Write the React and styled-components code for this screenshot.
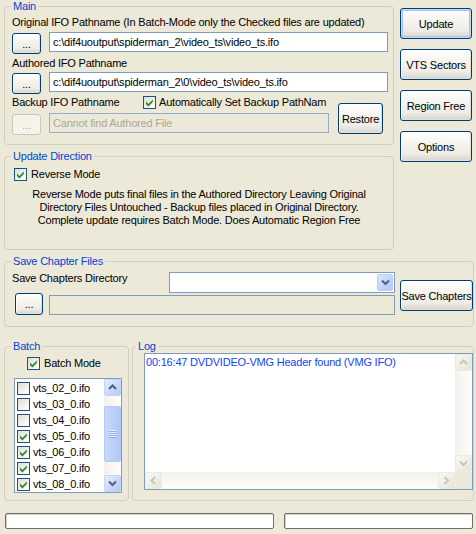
import React from "react";
import styled, { createGlobalStyle, css } from "styled-components";

const Global = createGlobalStyle`
  html, body { margin: 0; padding: 0; background: #ECE9D8; }
  body {
    font-family: "Liberation Sans", Arial, sans-serif;
    font-size: 11px;
    letter-spacing: -0.2px;
    color: #000;
  }
  * { box-sizing: border-box; }
`;

const Window = styled.div`
  width: 476px;
  height: 534px;
  padding: 0 0 0 4px;
  background: #ECE9D8;
  overflow: hidden;
`;

const TopRow = styled.div`
  display: flex;
  align-items: flex-start;
  gap: 6px;
`;

const LeftCol = styled.div`
  width: 390px;
  display: flex;
  flex-direction: column;
  gap: 5px;
`;

const SideButtons = styled.div`
  width: 72px;
  padding-top: 8px;
  display: flex;
  flex-direction: column;
  gap: 10px;
`;

const Group = styled.fieldset`
  margin: 0;
  padding: 0;
  min-width: 0;
  border: 1px solid #D0D0BF;
  border-radius: 4px;
  ${(p) => p.$w && css`width: ${p.$w}px;`}
  ${(p) => p.$mt && css`margin-top: ${p.$mt}px;`}
`;

const Legend = styled.legend`
  margin-left: ${(p) => (p.$indent != null ? p.$indent : 6)}px;
  padding: 0 2px;
  line-height: 13px;
  color: #0046D5;
`;

const Body = styled.div`
  display: flex;
  flex-direction: ${(p) => p.$dir || "column"};
  padding: ${(p) => p.$pad};
`;

const Label = styled.div`
  line-height: 13px;
  height: 13px;
  white-space: nowrap;
  ${(p) => p.$mt && css`margin-top: ${p.$mt}px;`}
  ${(p) => p.$w && css`width: ${p.$w}px; flex: none;`}
`;

const PathRow = styled.div`
  display: flex;
  align-items: flex-start;
  gap: ${(p) => (p.$gap != null ? p.$gap : 8)}px;
  margin-top: ${(p) => p.$mt || 0}px;
`;

const XPButton = styled.button`
  font: inherit;
  letter-spacing: inherit;
  color: #000;
  flex: none;
  width: ${(p) => p.$w}px;
  height: ${(p) => p.$h}px;
  margin-top: ${(p) => p.$mt || 0}px;
  margin-left: ${(p) => p.$ml || 0}px;
  padding: 0;
  white-space: nowrap;
  border: 1px solid #003C74;
  border-radius: 3px;
  background: linear-gradient(180deg, #FFFFFF 0%, #F6F5F0 35%, #EDECE6 75%, #D9D4C9 100%);
  box-shadow: inset 1px 1px 0 #FFFFFF, inset -1px -1px 0 #E2DFD5;
  ${(p) =>
    p.$default &&
    css`
      box-shadow: inset 0 0 0 1px #C4DAFA, inset 0 0 0 2px #A9C3F0;
    `}
  &:disabled {
    border-color: #C9C7BA;
    background: #F5F4EA;
    color: #ACA899;
    box-shadow: none;
  }
`;

const TextField = styled.input`
  font: inherit;
  letter-spacing: inherit;
  height: 20px;
  flex: 1;
  min-width: 0;
  margin: ${(p) => p.$mt || 0}px 0 0 0;
  padding: 0 0 0 3px;
  border: 1px solid #7F9DB9;
  background: #FFFFFF;
  color: #000;
  outline: none;
  &:disabled {
    background: #ECE9D8;
    color: #ACA899;
    border-color: #97AECA;
  }
`;

const CheckLine = styled.div`
  display: flex;
  align-items: center;
  height: 13px;
  gap: ${(p) => (p.$gap != null ? p.$gap : 4)}px;
  margin-left: ${(p) => p.$ml || 0}px;
  white-space: nowrap;
  line-height: 13px;
`;

const Box = styled.span`
  width: 13px;
  height: 13px;
  flex: none;
  border: 1px solid #1C5180;
  background: linear-gradient(135deg, #DCDCD7 0%, #F2F2EF 60%, #FFFFFF 100%);
  display: inline-flex;
  align-items: center;
  justify-content: center;
`;

const Check = ({ checked }) => (
  <Box>
    {checked && (
      <svg width="11" height="11" viewBox="0 0 11 11">
        <path d="M2 4.6 L4.4 7 L8.8 2.6 L8.8 5 L4.4 9.4 L2 7 Z" fill="#21891F" />
      </svg>
    )}
  </Box>
);

const BackupArea = styled.div`
  display: flex;
  align-items: flex-start;
  margin-top: 2px;
`;

const BackupLeft = styled.div`
  width: 317px;
  display: flex;
  flex-direction: column;
`;

const Description = styled.div`
  margin-top: 7px;
  padding-right: 9px;
  text-align: center;
  line-height: 13px;
  white-space: nowrap;
`;

const Combo = styled.div`
  flex: 1;
  height: 21px;
  border: 1px solid #7F9DB9;
  background: #FFFFFF;
  display: flex;
  justify-content: flex-end;
  padding: 1px;
`;

const DropButton = styled.span`
  width: 16px;
  height: 17px;
  border: 1px solid #BBCDF6;
  border-radius: 2px;
  background: linear-gradient(135deg, #DCE6FD 0%, #C3D4FA 55%, #B3C8F6 100%);
  display: flex;
  align-items: center;
  justify-content: center;
`;

const ChapterLeft = styled.div`
  flex: 1;
  display: flex;
  flex-direction: column;
`;

const ChapterRow = styled.div`
  display: flex;
  align-items: flex-start;
`;

const BottomRow = styled.div`
  display: flex;
  gap: 3px;
  margin-top: 13px;
`;

const ListBox = styled.div`
  margin-top: 8px;
  width: 108px;
  height: 115px;
  border: 1px solid #7F9DB9;
  background: #FFFFFF;
  display: flex;
`;

const ListItems = styled.div`
  flex: 1;
  overflow: hidden;
  padding: 1px 0 0 2px;
`;

const ListItem = styled.div`
  display: flex;
  align-items: center;
  gap: 3px;
  height: 16px;
  line-height: 13px;
  white-space: nowrap;
`;

const ScrollBarV = styled.div`
  width: 17px;
  flex: none;
  display: flex;
  flex-direction: column;
  justify-content: space-between;
  background: linear-gradient(90deg, #F3F1EC 0%, #FEFEFB 100%);
`;

const ScrollBtn = styled.span`
  width: 17px;
  height: 17px;
  flex: none;
  display: flex;
  align-items: center;
  justify-content: center;
  border-radius: 2px;
  ${(p) =>
    p.$off
      ? css`
          border: 1px solid #ECEBE3;
          background: linear-gradient(135deg, #F8F7F2 0%, #EEEDE5 60%, #E6E4DA 100%);
        `
      : css`
          border: 1px solid #C3D3FD;
          background: linear-gradient(135deg, #E8EFFD 0%, #C9D8FA 55%, #B6CAF6 100%);
        `}
`;

const Thumb = styled.span`
  width: 17px;
  height: ${(p) => p.$h}px;
  margin-top: ${(p) => p.$top}px;
  flex: none;
  border: 1px solid #B3C8F5;
  border-radius: 2px;
  background: linear-gradient(90deg, #C9D8FB 0%, #BCD0F8 50%, #B2C8F5 100%);
  display: flex;
  align-items: center;
  justify-content: center;
`;

const Grip = styled.span`
  width: 7px;
  height: 8px;
  background: repeating-linear-gradient(180deg, #EEF4FE 0 1px, #8CA9E8 1px 2px);
`;

const ThumbTrack = styled.div`
  flex: 1;
  display: flex;
  flex-direction: column;
`;

const LogArea = styled.div`
  width: 329px;
  height: 137px;
  border: 1px solid #7F9DB9;
  background: #FFFFFF;
  display: grid;
  grid-template-columns: 1fr 17px;
  grid-template-rows: 1fr 17px;
`;

const LogText = styled.div`
  padding: 2px 0 0 1px;
  line-height: 13px;
  color: #1543F4;
  white-space: nowrap;
  overflow: hidden;
`;

const ScrollBarH = styled.div`
  display: flex;
  justify-content: space-between;
  background: linear-gradient(180deg, #F3F1EC 0%, #FEFEFB 100%);
`;

const Corner = styled.div`
  background: #ECE9D8;
`;

const StatusRow = styled.div`
  display: flex;
  gap: 10px;
  margin-top: 12px;
  padding-left: 1px;
`;

const StatusBar = styled.div`
  width: ${(p) => p.$w}px;
  height: 16px;
  border: 1px solid #6F6F6F;
  border-radius: 2px;
  background: #FFFFFF;
  box-shadow: inset 1px 1px 0 #D4D2C8;
`;

const Chevron = ({ dir, color }) => {
  const vertical = dir === "up" || dir === "down";
  const d = {
    up: "M1 5 L4.5 1.5 L8 5",
    down: "M1 1.5 L4.5 5 L8 1.5",
    left: "M5 1 L1.5 4.5 L5 8",
    right: "M1.5 1 L5 4.5 L1.5 8",
  }[dir];
  return (
    <svg width={vertical ? 9 : 7} height={vertical ? 7 : 9} viewBox={vertical ? "0 0 9 7" : "0 0 7 9"}>
      <path d={d} fill="none" stroke={color} strokeWidth="2" />
    </svg>
  );
};

const files = [
  { name: "vts_02_0.ifo", on: false },
  { name: "vts_03_0.ifo", on: false },
  { name: "vts_04_0.ifo", on: false },
  { name: "vts_05_0.ifo", on: true },
  { name: "vts_06_0.ifo", on: true },
  { name: "vts_07_0.ifo", on: true },
  { name: "vts_08_0.ifo", on: true },
];

export default function App() {
  return (
    <>
      <Global />
      <Window>
        <TopRow>
          <LeftCol>
            <Group>
              <Legend>Main</Legend>
              <Body $pad="3px 5px 9px 7px">
                <Label>Original IFO Pathname (In Batch-Mode only the Checked files are updated)</Label>
                <PathRow $mt={3}>
                  <XPButton $w={29} $h={21} $mt={1}>...</XPButton>
                  <TextField readOnly defaultValue="c:\dif4uoutput\spiderman_2\video_ts\video_ts.ifo" />
                </PathRow>
                <Label $mt={3}>Authored IFO Pathname</Label>
                <PathRow $mt={2}>
                  <XPButton $w={29} $h={21} $mt={1}>...</XPButton>
                  <TextField readOnly defaultValue="c:\dif4uoutput\spiderman_2\0\video_ts\video_ts.ifo" />
                </PathRow>
                <BackupArea>
                  <BackupLeft>
                    <CheckLine $gap={0}>
                      <Label $w={131}>Backup IFO Pathname</Label>
                      <Check checked />
                      <Label style={{ marginLeft: 3 }}>Automatically Set Backup PathNam</Label>
                    </CheckLine>
                    <PathRow $mt={4}>
                      <XPButton $w={29} $h={21} $mt={1} disabled>...</XPButton>
                      <TextField disabled defaultValue="Cannot find Authored File" />
                    </PathRow>
                  </BackupLeft>
                  <XPButton $w={45} $h={31} $mt={7} $ml={9}>Restore</XPButton>
                </BackupArea>
              </Body>
            </Group>
            <Group>
              <Legend>Update Direction</Legend>
              <Body $pad="5px 0 22px 9px">
                <CheckLine>
                  <Check checked />
                  <span>Reverse Mode</span>
                </CheckLine>
                <Description>
                  Reverse Mode puts final files in the Authored Directory Leaving Original
                  <br />
                  Directory Files Untouched - Backup files placed in Original Directory.
                  <br />
                  Complete update requires Batch Mode. Does Automatic Region Free
                </Description>
              </Body>
            </Group>
          </LeftCol>
          <SideButtons>
            <XPButton $w={72} $h={31} $default>Update</XPButton>
            <XPButton $w={72} $h={31}>VTS Sectors</XPButton>
            <XPButton $w={72} $h={31}>Region Free</XPButton>
            <XPButton $w={72} $h={31}>Options</XPButton>
          </SideButtons>
        </TopRow>

        <Group $w={470} $mt={5}>
          <Legend>Save Chapter Files</Legend>
          <Body $dir="row" $pad="4px 0 11px 7px">
            <ChapterLeft>
              <ChapterRow>
                <Label $w={157}>Save Chapters Directory</Label>
                <Combo>
                  <DropButton>
                    <Chevron dir="down" color="#4D6185" />
                  </DropButton>
                </Combo>
              </ChapterRow>
              <PathRow $gap={6}>
                <XPButton $w={28} $h={22} $ml={3}>...</XPButton>
                <TextField disabled $mt={2} defaultValue="" style={{ borderColor: "#7F9DB9" }} />
              </PathRow>
            </ChapterLeft>
            <XPButton $w={73} $h={31} $mt={8} $ml={5}>Save Chapters</XPButton>
          </Body>
        </Group>

        <BottomRow>
          <Group $w={125}>
            <Legend>Batch</Legend>
            <Body $pad="4px 0 7px 9px">
              <CheckLine $ml={13}>
                <Check checked />
                <span>Batch Mode</span>
              </CheckLine>
              <ListBox>
                <ListItems>
                  {files.map((f) => (
                    <ListItem key={f.name}>
                      <Check checked={f.on} />
                      <span>{f.name}</span>
                    </ListItem>
                  ))}
                </ListItems>
                <ScrollBarV>
                  <ScrollBtn>
                    <Chevron dir="up" color="#4D6185" />
                  </ScrollBtn>
                  <ThumbTrack>
                    <Thumb $h={56} $top={10}>
                      <Grip />
                    </Thumb>
                  </ThumbTrack>
                  <ScrollBtn>
                    <Chevron dir="down" color="#4D6185" />
                  </ScrollBtn>
                </ScrollBarV>
              </ListBox>
            </Body>
          </Group>
          <Group $w={342}>
            <Legend $indent={3}>Log</Legend>
            <Body $pad="0 0 10px 11px">
              <LogArea>
                <LogText>00:16:47 DVDVIDEO-VMG Header found (VMG IFO)</LogText>
                <ScrollBarV>
                  <ScrollBtn $off>
                    <Chevron dir="up" color="#C9C7BA" />
                  </ScrollBtn>
                  <ScrollBtn $off>
                    <Chevron dir="down" color="#C9C7BA" />
                  </ScrollBtn>
                </ScrollBarV>
                <ScrollBarH>
                  <ScrollBtn $off>
                    <Chevron dir="left" color="#C9C7BA" />
                  </ScrollBtn>
                  <ScrollBtn $off>
                    <Chevron dir="right" color="#C9C7BA" />
                  </ScrollBtn>
                </ScrollBarH>
                <Corner />
              </LogArea>
            </Body>
          </Group>
        </BottomRow>

        <StatusRow>
          <StatusBar $w={269} />
          <StatusBar $w={189} />
        </StatusRow>
      </Window>
    </>
  );
}
